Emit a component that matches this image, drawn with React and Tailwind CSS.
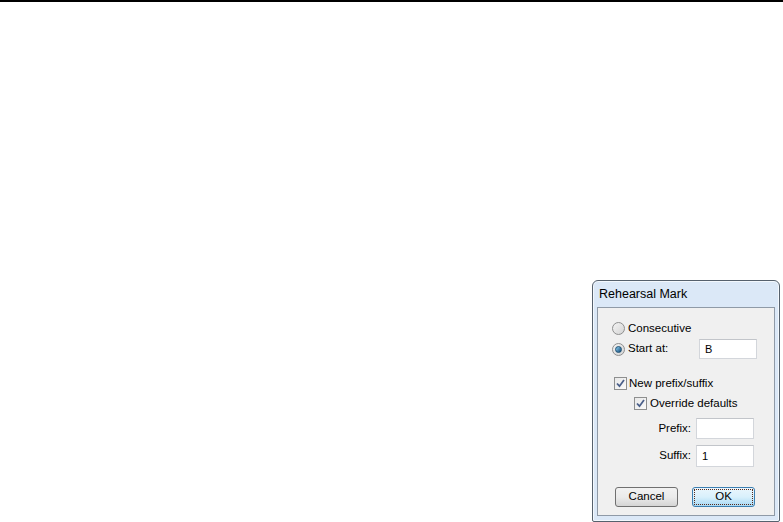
const font = { fontFamily: '"Liberation Sans", Arial, sans-serif' };

function Radio({ checked }) {
  return (
    <span className="relative flex h-[13px] w-[13px] shrink-0 items-center justify-center rounded-full border border-[#8e8f8f] bg-gradient-to-br from-[#f4f4f4] to-[#d4d4d4]">
      {checked && (
        <span className="h-[7px] w-[7px] rounded-full border border-[#1d4f72] bg-gradient-to-br from-[#8fd3f5] to-[#0e4a78]" />
      )}
    </span>
  );
}

function Check() {
  return (
    <span className="flex h-[13px] w-[13px] shrink-0 items-center justify-center border border-[#8e8f8f] bg-gradient-to-br from-[#e8e8e8] to-[#fafafa]">
      <svg width="9" height="9" viewBox="0 0 9 9">
        <path d="M1 4.5 L3.5 7.2 L8 1" fill="none" stroke="#4a5f8a" strokeWidth="1.8" />
      </svg>
    </span>
  );
}

function TextBox({ value, h = 'h-[21px]' }) {
  return (
    <div className={`flex ${h} w-[58px] items-center border border-[#d3d6db] border-t-[#c2c5ca] bg-white pl-[5px] text-[11px] text-black`}>
      {value}
    </div>
  );
}

export default function App() {
  return (
    <div className="h-[522px] w-[783px] overflow-hidden bg-white" style={font}>
      <div className="h-[2px] w-full bg-black" />
      <div className="pl-[592px] pt-[278px]">
        <div className="flex h-[242px] w-[188px] flex-col rounded-t-[6px] rounded-b-[2px] border border-[#56616d] bg-[#dbe8f7] px-[4px] pb-[5px] shadow-[inset_0_0_0_1px_#f3f8fd]">
          <div className="flex h-[26px] shrink-0 items-center pl-[2px] pt-[1px] text-[12.5px] text-black">
            Rehearsal Mark
          </div>
          <div className="flex flex-1 flex-col border border-[#8f9aa7] bg-[#f0f0f0] pl-[14px] pt-[14px] text-[11.5px] text-black">
            <div className="flex h-[13px] items-center gap-[3px]">
              <Radio />
              <span>Consecutive</span>
            </div>
            <div className="mt-[4px] flex h-[20px] items-center">
              <Radio checked />
              <span className="ml-[3px] w-[71px]">Start at:</span>
              <TextBox value="B" h="h-[20px]" />
            </div>
            <div className="mt-[18px] flex h-[13px] items-center gap-[2px] pl-[2px]">
              <Check />
              <span>New prefix/suffix</span>
            </div>
            <div className="mt-[7px] flex h-[13px] items-center gap-[3px] pl-[22px]">
              <Check />
              <span>Override defaults</span>
            </div>
            <div className="mt-[8px] flex h-[21px] items-center">
              <span className="w-[84px] pr-[5px] text-right">Prefix:</span>
              <TextBox value="" />
            </div>
            <div className="mt-[6px] flex h-[22px] items-center">
              <span className="w-[84px] pr-[5px] text-right">Suffix:</span>
              <TextBox value="1" h="h-[22px]" />
            </div>
            <div className="mt-[20px] flex h-[20px] gap-[14px] pl-[3px]">
              <button className="flex h-[20px] w-[63px] items-center justify-center rounded-[3px] border border-[#707070] bg-gradient-to-b from-[#f2f2f2] via-[#ebebeb] to-[#d5d5d5] text-[11.5px] text-black">
                Cancel
              </button>
              <button className="flex h-[20px] w-[63px] items-center justify-center rounded-[3px] border border-[#3c7fb1] bg-gradient-to-b from-[#eaf6fd] via-[#d9f0fc] to-[#a7d9f5] p-[1px] text-[11.5px] text-black">
                <span className="flex h-full w-full items-center justify-center border border-dotted border-[#5a2a1a]">
                  OK
                </span>
              </button>
            </div>
          </div>
        </div>
      </div>
    </div>
  );
}
